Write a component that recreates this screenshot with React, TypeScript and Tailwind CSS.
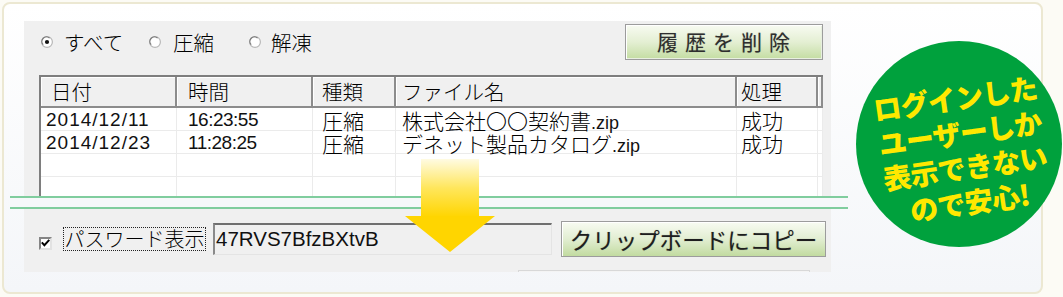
import React from "react";

function Radio({ checked }: { checked?: boolean }) {
  return (
    <svg width="12" height="12" viewBox="0 0 12 12" className="shrink-0">
      <circle cx="6" cy="6" r="5.4" fill="#ffffff" stroke="#b8b8b8" strokeWidth="1.2" />
      <path d="M2.2 8.6 A4.4 4.4 0 0 1 8.6 2.2" fill="none" stroke="#7a7a7a" strokeWidth="1.2" />
      {checked && <circle cx="6" cy="6" r="2.1" fill="#111" />}
    </svg>
  );
}

const cols = [136, 136, 83, 341, 81, 5];
const headPad = [10, 11, 9, 6, 4, 0];
const rowPad = [5, 11, 9, 6, 4, 0];
const headers = ["日付", "時間", "種類", "ファイル名", "処理", ""];

type Row = { date: string; time: string; kind: string; name: string; ext: string; res: string };
const rows: Row[] = [
  { date: "2014/12/11", time: "16:23:55", kind: "圧縮", name: "株式会社〇〇契約書", ext: ".zip", res: "成功" },
  { date: "2014/12/23", time: "11:28:25", kind: "圧縮", name: "デネット製品カタログ", ext: ".zip", res: "成功" },
  { date: "", time: "", kind: "", name: "", ext: "", res: "" },
  { date: "", time: "", kind: "", name: "", ext: "", res: "" },
];

const cell =
  "h-[22px] shrink-0 border-r border-[#ebebeb] pt-[1px] leading-[22px] whitespace-nowrap font-['Liberation_Sans','Noto_Sans_CJK_JP',sans-serif] text-[19px] text-[#111]";
const cjk = "font-['Noto_Sans_CJK_JP',sans-serif] text-[21px] font-light text-black";

export default function App() {
  return (
    <div className="w-[1063px] h-[297px] bg-[#fcfbf5] pt-[2px] pl-[2px] overflow-hidden font-['Noto_Sans_CJK_JP',sans-serif] text-black">
      <div className="relative w-[1041px] h-[292px] rounded-[8px] border-2 border-[#ece8d2] bg-gradient-to-b from-white to-[#f4f6f9] flex flex-col pt-[17px]">
        {/* top panel */}
        <div className="ml-[20px] w-[807px] h-[175px] bg-[#f0f0f0] flex flex-col overflow-hidden">
          <div className="mt-[3px] h-[36px] flex items-center justify-between pr-[8px]">
            <div className="flex items-center pl-[17px] text-[20.5px] font-light leading-none">
              <div className="w-[108px] flex items-center gap-[11px]">
                <Radio checked />
                <span>すべて</span>
              </div>
              <div className="w-[100px] flex items-center gap-[12px]">
                <Radio />
                <span>圧縮</span>
              </div>
              <div className="flex items-center gap-[10px]">
                <Radio />
                <span>解凍</span>
              </div>
            </div>
            <div className="w-[198px] h-[36px] border border-[#9c9c9c] shadow-[inset_1px_1px_0_#ffffff,inset_-1px_-1px_0_#e8efe0] bg-gradient-to-b from-[#f8fbf2] via-[#e4efd3] to-[#c4dda2] flex items-center justify-center pl-[6px] text-[21px] tracking-[7px] text-[#2e2e2e] [text-shadow:0_0_1px_rgba(0,0,0,0.3)]">
              履歴を削除
            </div>
          </div>
          <div className="ml-[15px] mt-[15px] w-[784px] flex-1 bg-white border-l-2 border-t-2 border-[#7e7e7e] flex flex-col">
            <div className="flex h-[31px] shrink-0">
              {headers.map((h, i) => (
                <div
                  key={i}
                  style={{ width: cols[i], paddingLeft: headPad[i] }}
                  className="h-[31px] shrink-0 bg-[#f0f0f0] border-r-2 border-b-2 border-[#8c8c8c] shadow-[inset_1px_1px_0_#ffffff] flex items-center text-[20.5px] font-light leading-none"
                >
                  {h}
                </div>
              ))}
            </div>
            {rows.map((r, ri) => (
              <div key={ri} className="flex h-[23px] shrink-0 border-b border-[#ebebeb]">
                <div style={{ width: cols[0], paddingLeft: rowPad[0] }} className={`${cell} tracking-[1px]`}>
                  {r.date}
                </div>
                <div style={{ width: cols[1], paddingLeft: rowPad[1] }} className={`${cell} tracking-[-0.5px]`}>
                  {r.time}
                </div>
                <div style={{ width: cols[2], paddingLeft: rowPad[2] }} className={cell}>
                  <span className={cjk}>{r.kind}</span>
                </div>
                <div style={{ width: cols[3], paddingLeft: rowPad[3] }} className={cell}>
                  <span className={cjk}>{r.name}</span>
                  <span className="text-[18px]">{r.ext}</span>
                </div>
                <div style={{ width: cols[4], paddingLeft: rowPad[4] }} className={cell}>
                  <span className={cjk}>{r.res}</span>
                </div>
                <div style={{ width: cols[5] }} className={cell} />
              </div>
            ))}
          </div>
        </div>

        {/* cut strip with green lines */}
        <div className="ml-[6px] w-[838px] h-[13px] border-y-2 border-[#80cd9e] bg-[#f6f8fa] shrink-0" />

        {/* bottom panel */}
        <div className="ml-[20px] w-[807px] h-[63px] bg-[#f0f0f0] flex flex-col shrink-0">
          <div className="mt-[12px] h-[36px] flex items-center pl-[15px]">
            <div className="mt-[8px] w-[13px] h-[13px] bg-white border-2 border-t-[#858585] border-l-[#858585] border-r-[#e2e2e2] border-b-[#e2e2e2] flex items-center justify-center shrink-0">
              <svg width="9" height="8" viewBox="0 0 9 8">
                <path d="M0.8 3.4 L3.4 6.2 L8.3 0.9" fill="none" stroke="#000" strokeWidth="2" />
              </svg>
            </div>
            <div className="ml-[11px] h-[24px] w-[143px] border border-dotted border-[#222] flex items-center justify-center text-[20px] font-light leading-none whitespace-nowrap">
              パスワード表示
            </div>
            <div className="ml-[7px] w-[339px] h-[32px] bg-[#f0f0f0] border-t-2 border-l-2 border-t-[#6f6f6f] border-l-[#8a8a8a] border-r border-b border-r-[#e4e4e4] border-b-[#e4e4e4] flex items-center pl-[1px] font-['Liberation_Sans',sans-serif] text-[20.5px] leading-none text-[#111]">
              47RVS7BfzBXtvB
            </div>
            <div className="ml-[9px] w-[265px] h-[36px] border border-[#9c9c9c] shadow-[inset_1px_1px_0_#ffffff] bg-gradient-to-b from-[#f8fbf2] via-[#e2eed2] to-[#c2dba0] flex items-center justify-center text-[22.5px] leading-none text-[#1e1e1e] whitespace-nowrap [text-shadow:0_0_1px_rgba(0,0,0,0.35)]">
              クリップボードにコピー
            </div>
          </div>
          <div className="mt-[13px] ml-[494px] w-[292px] h-[2px] border-t border-x border-[#d8d8d8] bg-[#f4f4f4]" />
        </div>

        {/* arrow overlay */}
        <svg className="absolute left-[401px] top-[155px]" width="90" height="93" viewBox="0 0 90 93">
          <defs>
            <linearGradient id="shaft" x1="0" y1="0" x2="0" y2="1">
              <stop offset="0" stopColor="#fffbe2" />
              <stop offset="0.5" stopColor="#ffe65c" />
              <stop offset="1" stopColor="#ffd500" />
            </linearGradient>
          </defs>
          <rect x="16" y="0" width="58" height="58" fill="url(#shaft)" />
          <polygon points="0,57 90,57 45,93" fill="#ffd500" />
        </svg>

        {/* badge circle */}
        <div className="absolute left-[852px] top-[37px] w-[206px] h-[206px] rounded-full bg-[#00a13d] flex items-center justify-center">
          <div className="rotate-[-8deg] translate-x-[4px] translate-y-[6px] flex flex-col items-center text-[#ffe800] font-black text-[28px] leading-[35px] tracking-[-0.5px] whitespace-nowrap">
            <span>ログインした</span>
            <span>ユーザーしか</span>
            <span>表示できない</span>
            <span>ので安心!</span>
          </div>
        </div>
      </div>
    </div>
  );
}
